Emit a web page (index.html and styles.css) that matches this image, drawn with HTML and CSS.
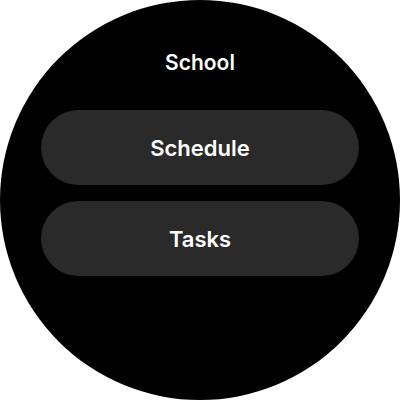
FILE: index.html
```html
<!DOCTYPE html>
<html>
<head>
<meta charset="utf-8">
<link rel="stylesheet" href="styles.css">
</head>
<body>
<div class="watch">
  <div class="title">School</div>
  <div class="list">
    <div class="chip">Schedule</div>
    <div class="chip">Tasks</div>
  </div>
</div>
</body>
</html>
```
FILE: styles.css
```css
html, body {
  margin: 0;
  padding: 0;
  background: #ffffff;
}
.watch {
  width: 400px;
  height: 400px;
  border-radius: 50%;
  background: #000000;
  display: flex;
  flex-direction: column;
  align-items: center;
  font-family: Inter, "Noto Sans", sans-serif;
  color: #ffffff;
}
.title {
  margin-top: 49px;
  height: 28px;
  line-height: 28px;
  font-size: 21px;
  font-weight: 600;
}
.list {
  margin-top: 33px;
  display: flex;
  flex-direction: column;
  gap: 16px;
}
.chip {
  width: 318px;
  height: 75px;
  border-radius: 38px;
  background: #2a2a2a;
  display: flex;
  align-items: center;
  justify-content: center;
  font-size: 22px;
  font-weight: 600;
}
```
